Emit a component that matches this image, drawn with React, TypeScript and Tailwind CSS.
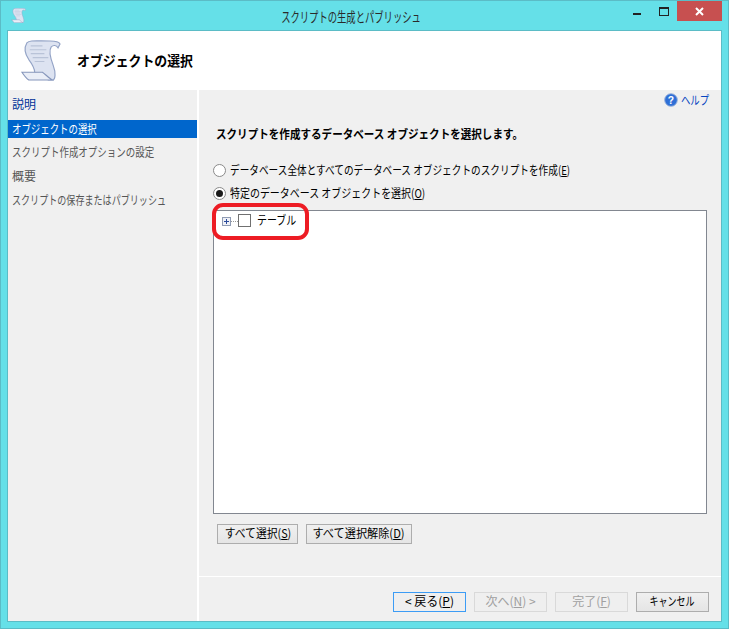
import React from 'react';

const jp = '[font-family:"Noto_Sans_CJK_JP","Liberation_Sans",sans-serif]';

const ScrollIcon = ({ size }: { size: number }) => (
  <svg width={size} height={size} viewBox="0 0 40 42">
    <path d="M6 3 C9 0 14 1 30 1 C34 1 39 2 40 4 L38 8 C36 5 33 5 31 7 C28 11 30 18 33 26 C36 34 35 40 33 41 L28 41 L14 33 C14 28 11 24 8 20 C4 14 3 8 6 3 Z" fill="#dde3f1" stroke="#93a3c6" strokeWidth="1.2" />
    <path d="M1 33 L22 33 C25 35 27 38 32 41 L8 41 C5 39 3 36 1 33 Z" fill="#eaeef7" stroke="#8696bb" strokeWidth="1.2" />
    <path d="M10 6 H22 M9 10 H26 M10 14 H24 M12 18 H28 M14 22 H24" stroke="#b9c3d8" strokeWidth="1.2" fill="none" />
  </svg>
);

const Acc = ({ c }: { c: string }) => <span className="underline underline-offset-1">{c}</span>;

const Button = ({ children, w, variant = 'normal' }: { children: React.ReactNode; w: string; variant?: 'normal' | 'focus' | 'disabled' }) => {
  const style =
    variant === 'focus'
      ? 'border-[#3c9cf5] bg-[#efefef] text-black'
      : variant === 'disabled'
        ? 'border-[#d9d9d9] bg-[#efefef] text-[#a0a0a0]'
        : 'border-[#adadad] bg-gradient-to-b from-[#f0f0f0] to-[#e5e5e5] text-black';
  return (
    <div className={`${w} h-[20px] border flex items-center justify-center pb-[2px] text-[12px] leading-none whitespace-nowrap ${style}`}>
      {children}
    </div>
  );
};

const Radio = ({ checked }: { checked?: boolean }) => (
  <div className="w-[13px] h-[13px] rounded-full border border-[#8a8a8a] bg-white flex items-center justify-center shrink-0">
    {checked && <div className="w-[7px] h-[7px] rounded-full bg-[#1a1a1a]" />}
  </div>
);

export default function App() {
  return (
    <div className={`w-[729px] h-[629px] bg-[#65e0e8] border border-[#5bbcc6] flex flex-col overflow-hidden ${jp}`}>
      {/* title bar */}
      <div className="h-[29px] flex items-start shrink-0">
        <div className="ml-[10px] mt-[7px]">
          <ScrollIcon size={15} />
        </div>
        <div className="flex-1 text-center text-[14px] leading-[30px] text-[#2a2a2a] pl-[42px] whitespace-nowrap">
          <span className="inline-block scale-x-[.665]">スクリプトの生成とパブリッシュ</span>
        </div>
        <div className="flex items-start mr-[6px]">
          <div className="w-[8px] h-[2px] bg-[#222] mt-[12px] mr-[18px]" />
          <div className="w-[10px] h-[9px] border border-[#222] border-t-[2px] mt-[6px] mr-[8px]" />
          <div className="w-[45px] h-[20px] bg-[#c75050] flex items-center justify-center text-white">
            <svg width="9" height="9" viewBox="0 0 9 9">
              <path d="M1 1 L8 8 M8 1 L1 8" stroke="#fff" strokeWidth="2" />
            </svg>
          </div>
        </div>
      </div>

      {/* client */}
      <div className="mx-[6px] mb-[6px] flex-1 bg-white border border-[#5bbcc6] flex flex-col min-h-0">
        {/* header */}
        <div className="h-[59px] shrink-0 flex items-center pl-[12px]">
          <ScrollIcon size={41} />
          <div className="ml-[16px] text-[14px] font-bold text-black whitespace-nowrap">
            <span className="inline-block origin-left scale-x-[.92]">オブジェクトの選択</span>
          </div>
        </div>
        <div className="flex-1 flex min-h-0">
          {/* left nav */}
          <div className="w-[189px] bg-[#f0f0f0] pt-[2px] text-[12px] shrink-0 whitespace-nowrap">
            <div className="h-[24px] leading-[24px] pl-[4px] text-[#003399]">説明</div>
            <div className="h-[18px] leading-[18px] pl-[4px] bg-[#0066cc] text-white mt-[4px] mb-[2px]">
              <span className="inline-block origin-left scale-x-[.785]">オブジェクトの選択</span>
            </div>
            <div className="h-[24px] leading-[24px] pl-[4px] text-[#555]">
              <span className="inline-block origin-left scale-x-[.79]">スクリプト作成オプションの設定</span>
            </div>
            <div className="h-[24px] leading-[24px] pl-[4px] text-[#555]">概要</div>
            <div className="h-[24px] leading-[24px] pl-[4px] text-[#555]">
              <span className="inline-block origin-left scale-x-[.755]">スクリプトの保存またはパブリッシュ</span>
            </div>
          </div>
          {/* right pane */}
          <div className="ml-[2px] flex-1 bg-[#f0f0f0] flex flex-col min-w-0 text-[12px] text-black whitespace-nowrap">
            <div className="h-[18px] flex items-center justify-end pr-[12px] mt-[1px] text-[#0645c0] gap-[3px]">
              <svg width="14" height="14" viewBox="0 0 15 15">
                <circle cx="7.5" cy="7.5" r="6.8" fill="#2f6fd6" stroke="#9bb4dc" />
                <text x="7.5" y="11.5" textAnchor="middle" fontSize="11" fontWeight="bold" fill="#fff" fontFamily="Liberation Sans">?</text>
              </svg>
              <div className="w-[28px]">
                <span className="inline-block origin-left scale-x-[.78]">ヘルプ</span>
              </div>
            </div>
            <div className="ml-[17px] mt-[16px] font-bold leading-[18px]">
              <span className="inline-block origin-left scale-x-[.88]">スクリプトを作成するデータベース オブジェクトを選択します。</span>
            </div>
            <div className="ml-[14px] mt-[18px] flex items-center gap-[4px] leading-[18px] h-[18px]">
              <Radio />
              <span className="inline-block origin-left scale-x-[.804]">データベース全体とすべてのデータベース オブジェクトのスクリプトを作成(<Acc c="E" />)</span>
            </div>
            <div className="ml-[14px] mt-[5px] flex items-center gap-[4px] leading-[18px] h-[18px]">
              <Radio checked />
              <span className="inline-block origin-left scale-x-[.83]">特定のデータベース オブジェクトを選択(<Acc c="O" />)</span>
            </div>
            {/* tree */}
            <div className="relative ml-[14px] mr-[14px] mt-[8px] h-[304px] bg-white border border-[#828790] shrink-0">
              <div className="flex items-center h-[18px] pl-[8px]">
                <div className="w-[9px] h-[9px] border border-[#8f9bb3] bg-[#eef0f6] flex items-center justify-center mt-[2px]">
                  <svg width="7" height="7" viewBox="0 0 7 7">
                    <path d="M3.5 1 V6 M1 3.5 H6" stroke="#2a4a9a" strokeWidth="1" />
                  </svg>
                </div>
                <div className="w-[7px] border-t border-dotted border-[#999] mt-[2px]" />
                <div className="w-[13px] h-[13px] border border-[#707070] bg-white" />
                <span className="ml-[6px] leading-[18px] inline-block origin-left scale-x-[.83]">テーブル</span>
              </div>
              {/* red annotation */}
              <div className="absolute left-[-2px] top-[-8px] w-[97px] h-[37px] border-[4px] border-[#ed1c24] rounded-[11px]" />
            </div>
            <div className="ml-[18px] mt-[10px] flex gap-[8px]">
              <Button w="w-[81px]"><span className="inline-block scale-x-[.9]">すべて選択(<Acc c="S" />)</span></Button>
              <Button w="w-[106px]"><span className="inline-block scale-x-[.93]">すべて選択解除(<Acc c="D" />)</span></Button>
            </div>
            <div className="mt-[32px] h-px bg-white" />
            <div className="mt-[15px] flex justify-end pr-[12px] gap-[8px]">
              <Button w="w-[73px]" variant="focus"><span>&lt; 戻る(<Acc c="P" />)</span></Button>
              <Button w="w-[73px]" variant="disabled"><span>次へ(<Acc c="N" />) &gt;</span></Button>
              <Button w="w-[73px]" variant="disabled"><span>完了(<Acc c="F" />)</span></Button>
              <Button w="w-[73px]"><span className="inline-block scale-x-[.75]">キャンセル</span></Button>
            </div>
          </div>
        </div>
      </div>
    </div>
  );
}
